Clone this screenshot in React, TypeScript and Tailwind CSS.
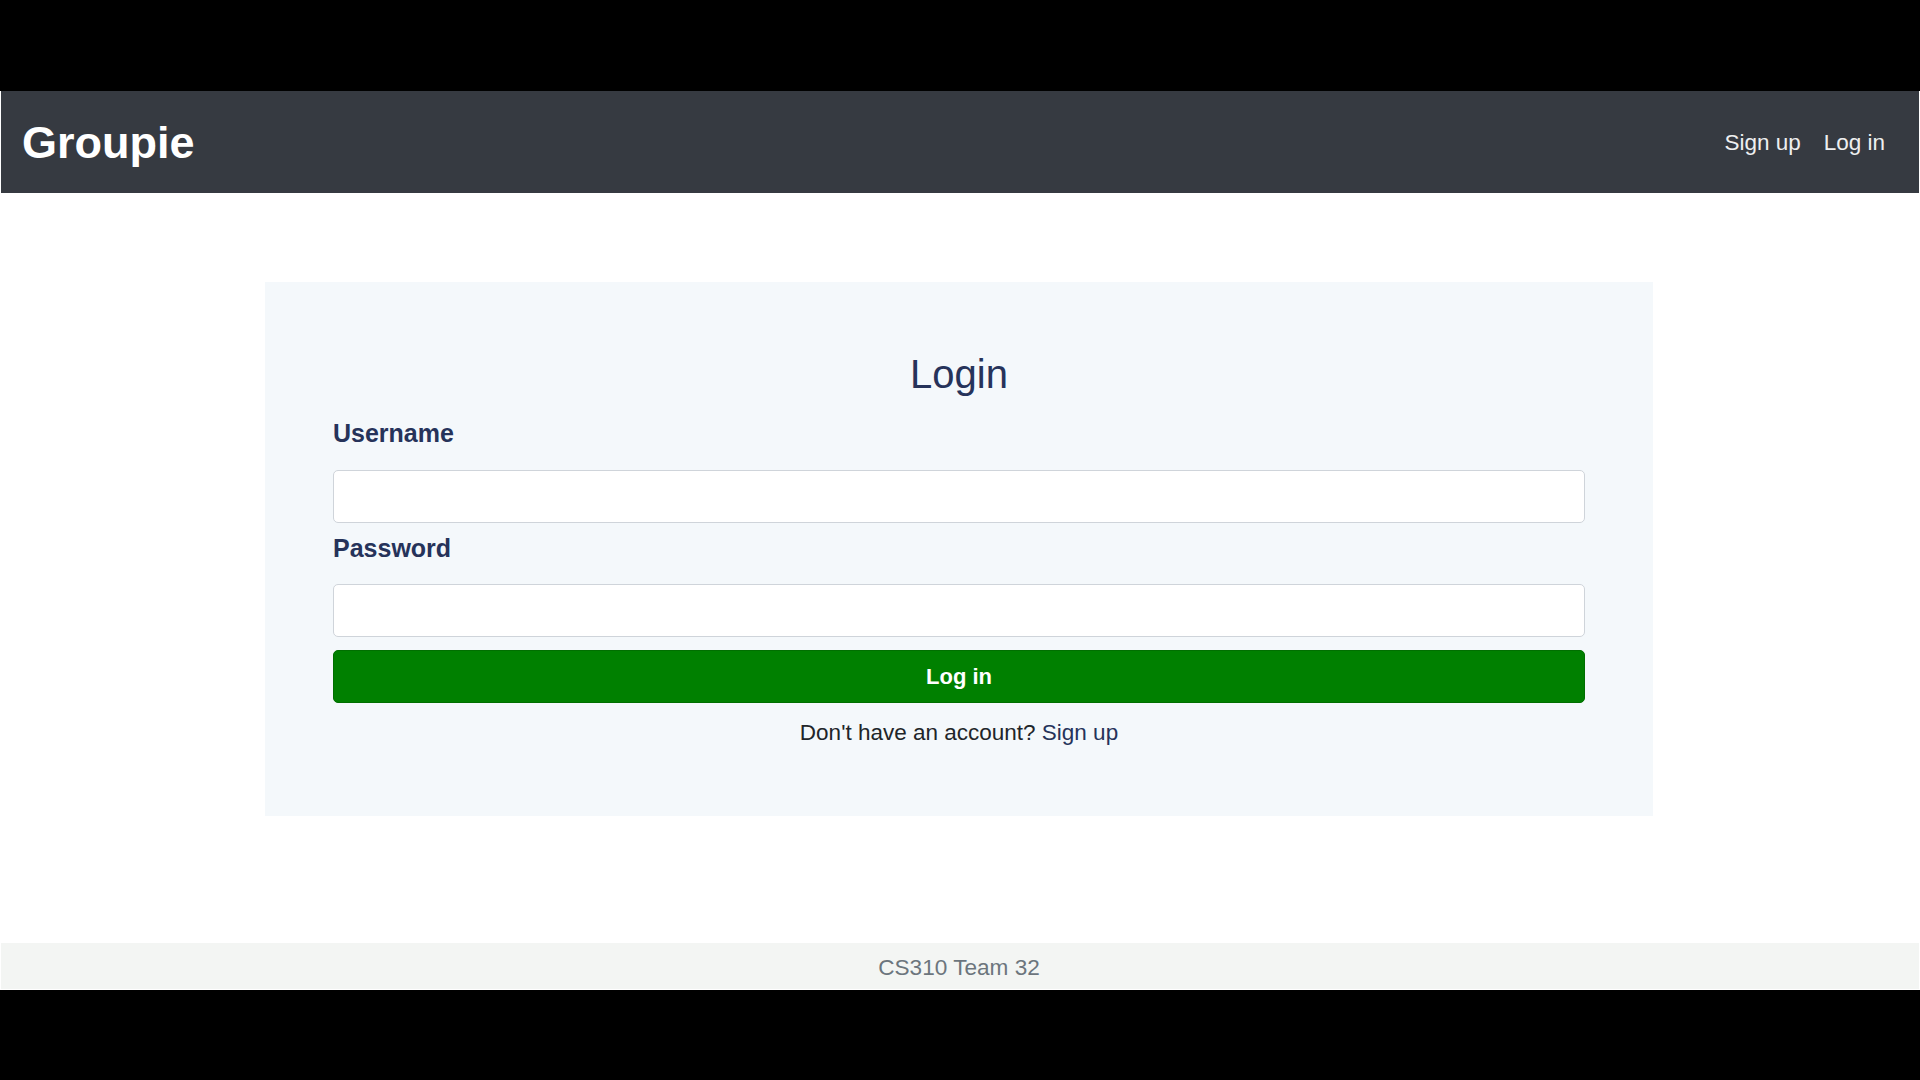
import React from "react";

export default function App() {
  const font = { fontFamily: '"Liberation Sans", Arial, sans-serif' };
  return (
    <div className="w-[1920px] h-[1080px] bg-black flex flex-col overflow-hidden" style={font}>
      <div className="h-[91px] shrink-0 bg-black" />
      <div className="h-[899px] shrink-0 bg-white flex flex-col">
        <nav className="mx-px h-[102px] shrink-0 bg-[#363a41] flex items-center justify-between pl-[21px] pr-[34px]">
          <a className="text-[45px] leading-[53px] font-bold text-white">Groupie</a>
          <div className="flex items-center gap-[23px] text-[22.5px] leading-[33px] text-[#eeeff0]">
            <a>Sign up</a>
            <a>Log in</a>
          </div>
        </nav>
        <main className="flex-1 pt-[89px]">
          <div className="ml-[265px] w-[1388px] bg-[#f4f8fb] px-[68px] pt-[69px] pb-[67px] flex flex-col">
            <h1 className="text-center text-[40px] leading-[47px] text-[#26335a]">Login</h1>
            <label className="mt-[20px] text-[25px] leading-[30px] font-bold text-[#26335a]">Username</label>
            <input
              type="text"
              className="mt-[22px] h-[53px] w-full rounded-[5px] border border-[#cfd4da] bg-white px-3 text-[22px] outline-none"
            />
            <label className="mt-[10px] text-[25px] leading-[30px] font-bold text-[#26335a]">Password</label>
            <input
              type="password"
              className="mt-[21px] h-[53px] w-full rounded-[5px] border border-[#cfd4da] bg-white px-3 text-[22px] outline-none"
            />
            <button className="mt-[13px] h-[53px] w-full rounded-[5px] border border-[#006f00] bg-[#008000] text-[22px] font-bold text-white">
              Log in
            </button>
            <p className="mt-[13px] text-center text-[22.5px] leading-[33px] text-[#212529]">
              Don't have an account? <a className="text-[#26335a]">Sign up</a>
            </p>
          </div>
        </main>
        <footer className="mx-px h-[46px] shrink-0 bg-[#f3f5f3] flex items-center justify-center pt-[4px] pr-[2px] text-[22.6px] text-[#6c757d]">
          CS310 Team 32
        </footer>
        <div className="h-px shrink-0 bg-white" />
      </div>
      <div className="flex-1 bg-black" />
    </div>
  );
}
